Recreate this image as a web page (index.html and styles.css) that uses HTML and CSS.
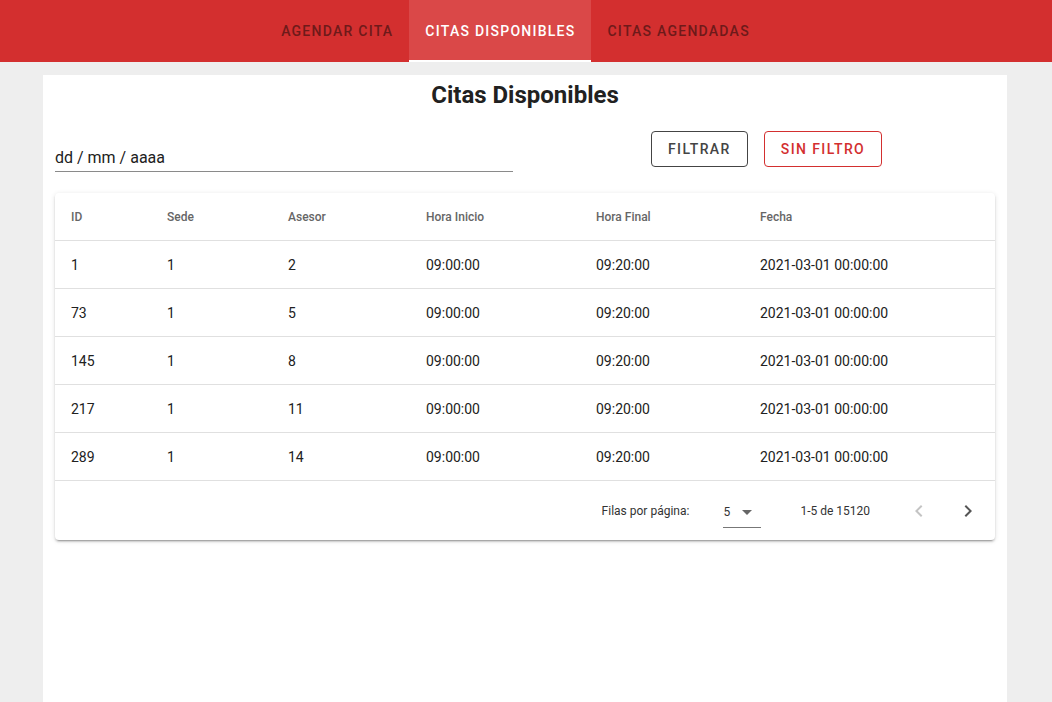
FILE: index.html
```html
<!DOCTYPE html>
<html lang="es">
<head>
<meta charset="utf-8">
<title>Citas Disponibles</title>
<link rel="stylesheet" href="styles.css">
</head>
<body>
<header class="appbar">
  <nav class="tabs">
    <a class="tab">AGENDAR CITA</a>
    <a class="tab active">CITAS DISPONIBLES</a>
    <a class="tab">CITAS AGENDADAS</a>
  </nav>
</header>
<main class="container">
  <h1 class="title">Citas Disponibles</h1>
  <div class="filters">
    <div class="date-field"><span>dd / mm / aaaa</span></div>
    <div class="buttons">
      <button class="btn btn-dark">FILTRAR</button>
      <button class="btn btn-red">SIN FILTRO</button>
    </div>
  </div>
  <section class="paper">
    <table class="grid">
      <colgroup>
        <col class="c1"><col class="c2"><col class="c3"><col class="c4"><col class="c5"><col class="c6">
      </colgroup>
      <thead>
        <tr><th>ID</th><th>Sede</th><th>Asesor</th><th>Hora Inicio</th><th>Hora Final</th><th>Fecha</th></tr>
      </thead>
      <tbody>
        <tr><td>1</td><td>1</td><td>2</td><td>09:00:00</td><td>09:20:00</td><td>2021-03-01 00:00:00</td></tr>
        <tr><td>73</td><td>1</td><td>5</td><td>09:00:00</td><td>09:20:00</td><td>2021-03-01 00:00:00</td></tr>
        <tr><td>145</td><td>1</td><td>8</td><td>09:00:00</td><td>09:20:00</td><td>2021-03-01 00:00:00</td></tr>
        <tr><td>217</td><td>1</td><td>11</td><td>09:00:00</td><td>09:20:00</td><td>2021-03-01 00:00:00</td></tr>
        <tr><td>289</td><td>1</td><td>14</td><td>09:00:00</td><td>09:20:00</td><td>2021-03-01 00:00:00</td></tr>
      </tbody>
    </table>
    <div class="pagination">
      <span class="rows-label">Filas por página:</span>
      <div class="select"><span>5</span><svg class="caret" width="24" height="24" viewBox="0 0 24 24"><path d="M7 10l5 5 5-5z"/></svg></div>
      <span class="range">1-5 de 15120</span>
      <div class="nav">
        <span class="icon-btn disabled"><svg width="24" height="24" viewBox="0 0 24 24"><path d="M15.41 7.41L14 6l-6 6 6 6 1.41-1.41L10.83 12z"/></svg></span>
        <span class="icon-btn"><svg width="24" height="24" viewBox="0 0 24 24"><path d="M10 6L8.59 7.41 13.17 12l-4.58 4.59L10 18l6-6z"/></svg></span>
      </div>
    </div>
  </section>
</main>
</body>
</html>
```
FILE: styles.css
```css
* { box-sizing: border-box; }
html, body { height: 100%; }
body {
  margin: 0;
  background: #eeeeee;
  font-family: Roboto, "Liberation Sans", Arial, sans-serif;
  color: rgba(0,0,0,0.87);
  display: flex;
  flex-direction: column;
  overflow: hidden;
}
.appbar {
  background: #d32f2f;
  height: 62px;
  flex: none;
}
.tabs {
  display: flex;
  justify-content: center;
  height: 100%;
  padding-right: 21px;
}
.tab {
  display: flex;
  align-items: center;
  padding: 0 16px;
  height: 100%;
  font-size: 14px;
  font-weight: 500;
  letter-spacing: 1.25px;
  color: #6e1a1a;
  cursor: pointer;
}
.tab.active {
  background: #da4848;
  color: #ffffff;
  box-shadow: inset 0 -2px 0 #ffffff;
}
.container {
  flex: 1;
  width: 964px;
  margin: 13px 45px 0 43px;
  background: #ffffff;
  padding: 0 12px;
}
.title {
  margin: 0;
  padding-top: 1px;
  height: 44px;
  text-align: center;
  font-size: 24px;
  font-weight: 700;
  line-height: 38px;
  color: #212121;
}
.filters {
  display: flex;
  align-items: flex-start;
  height: 74px;
  padding-top: 12px;
}
.date-field {
  width: 458px;
  margin-top: 6px;
  height: 35px;
  border-bottom: 1px solid #8a8a8a;
  display: flex;
  align-items: center;
  padding-top: 6px;
  font-size: 16px;
  color: #212121;
}
.buttons {
  display: flex;
  gap: 16px;
  margin-left: 138px;
}
.btn {
  height: 36px;
  padding: 0 16px;
  border-radius: 4px;
  background: #ffffff;
  font-family: inherit;
  font-size: 14px;
  font-weight: 500;
  letter-spacing: 1.4px;
}
.btn-dark {
  border: 1px solid #444444;
  color: #444444;
}
.btn-red {
  border: 1px solid #d32f2f;
  color: #d32f2f;
}
.paper {
  width: 940px;
  border-radius: 4px;
  box-shadow: 0 3px 1px -2px rgba(0,0,0,0.2), 0 2px 2px 0 rgba(0,0,0,0.14), 0 1px 5px 0 rgba(0,0,0,0.12);
  background: #ffffff;
}
.grid {
  width: 100%;
  border-collapse: collapse;
  table-layout: fixed;
}
.c1 { width: 96px; }
.c2 { width: 121px; }
.c3 { width: 138px; }
.c4 { width: 170px; }
.c5 { width: 164px; }
.c6 { width: 251px; }
.grid th, .grid td {
  text-align: left;
  padding: 2px 16px 0;
  height: 48px;
  border-bottom: 1px solid #e0e0e0;
}
.grid th {
  height: 47px;
  font-size: 12px;
  font-weight: 500;
  color: #666666;
}
.grid td {
  font-size: 14px;
  color: #212121;
}
.pagination {
  display: flex;
  align-items: center;
  justify-content: flex-end;
  height: 59px;
  padding-top: 2px;
  padding-right: 15px;
  font-size: 12px;
  color: #333333;
}
.rows-label { margin-right: 34px; }
.select {
  display: flex;
  align-items: center;
  width: 38px;
  height: 32px;
  border-bottom: 1px solid #777777;
  margin-top: 1px;
  position: relative;
}
.select span { padding-top: 2px; }
.caret {
  position: absolute;
  right: 2px;
  top: 4px;
  fill: #666666;
}
.range { margin-left: 39px; }
.nav {
  display: flex;
  gap: 25px;
  margin-left: 37px;
}
.icon-btn {
  width: 24px;
  height: 24px;
  display: flex;
}
.icon-btn svg { fill: #555555; }
.icon-btn.disabled svg { fill: #c4c4c4; }
```
